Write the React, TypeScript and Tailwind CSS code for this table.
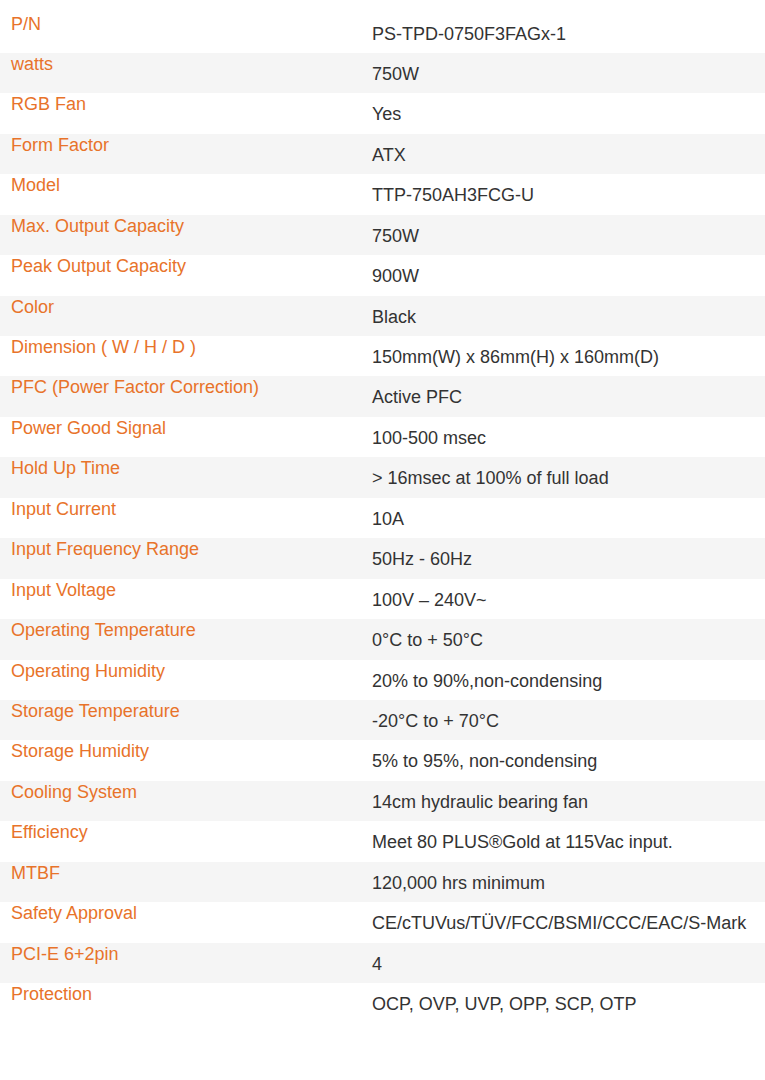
import React from 'react'

type SpecRow = {
  label: string
  value: string
}

const SPECS: SpecRow[] = [
  { label: 'P/N', value: 'PS-TPD-0750F3FAGx-1' },
  { label: 'watts', value: '750W' },
  { label: 'RGB Fan', value: 'Yes' },
  { label: 'Form Factor', value: 'ATX' },
  { label: 'Model', value: 'TTP-750AH3FCG-U' },
  { label: 'Max. Output Capacity', value: '750W' },
  { label: 'Peak Output Capacity', value: '900W' },
  { label: 'Color', value: 'Black' },
  { label: 'Dimension ( W / H / D )', value: '150mm(W) x 86mm(H) x 160mm(D)' },
  { label: 'PFC (Power Factor Correction)', value: 'Active PFC' },
  { label: 'Power Good Signal', value: '100-500 msec' },
  { label: 'Hold Up Time', value: '> 16msec at 100% of full load' },
  { label: 'Input Current', value: '10A' },
  { label: 'Input Frequency Range', value: '50Hz - 60Hz' },
  { label: 'Input Voltage', value: '100V – 240V~' },
  { label: 'Operating Temperature', value: '0°C to + 50°C' },
  { label: 'Operating Humidity', value: '20% to 90%,non-condensing' },
  { label: 'Storage Temperature', value: '-20°C to + 70°C' },
  { label: 'Storage Humidity', value: '5% to 95%, non-condensing' },
  { label: 'Cooling System', value: '14cm hydraulic bearing fan' },
  { label: 'Efficiency', value: 'Meet 80 PLUS®Gold at 115Vac input.' },
  { label: 'MTBF', value: '120,000 hrs minimum' },
  { label: 'Safety Approval', value: 'CE/cTUVus/TÜV/FCC/BSMI/CCC/EAC/S-Mark' },
  { label: 'PCI-E 6+2pin', value: '4' },
  { label: 'Protection', value: 'OCP, OVP, UVP, OPP, SCP, OTP' },
]

const App: React.FC = () => {
  return (
    <div className="min-h-[1080px] w-[765px] bg-white pt-[12.5px] font-['Liberation_Sans',Arial,sans-serif] text-[18px] leading-[20px]">
      {SPECS.map((row, index) => (
        <div
          key={row.label}
          className={index % 2 === 1 ? 'flex h-[40.45px] bg-[#f5f5f5]' : 'flex h-[40.45px] bg-white'}
        >
          <div className="w-[372px] shrink-0 pl-[11px] pt-px text-[#e8732a]">{row.label}</div>
          <div className="flex-1 pt-[11px] text-[#333333]">{row.value}</div>
        </div>
      ))}
    </div>
  )
}

export default App
